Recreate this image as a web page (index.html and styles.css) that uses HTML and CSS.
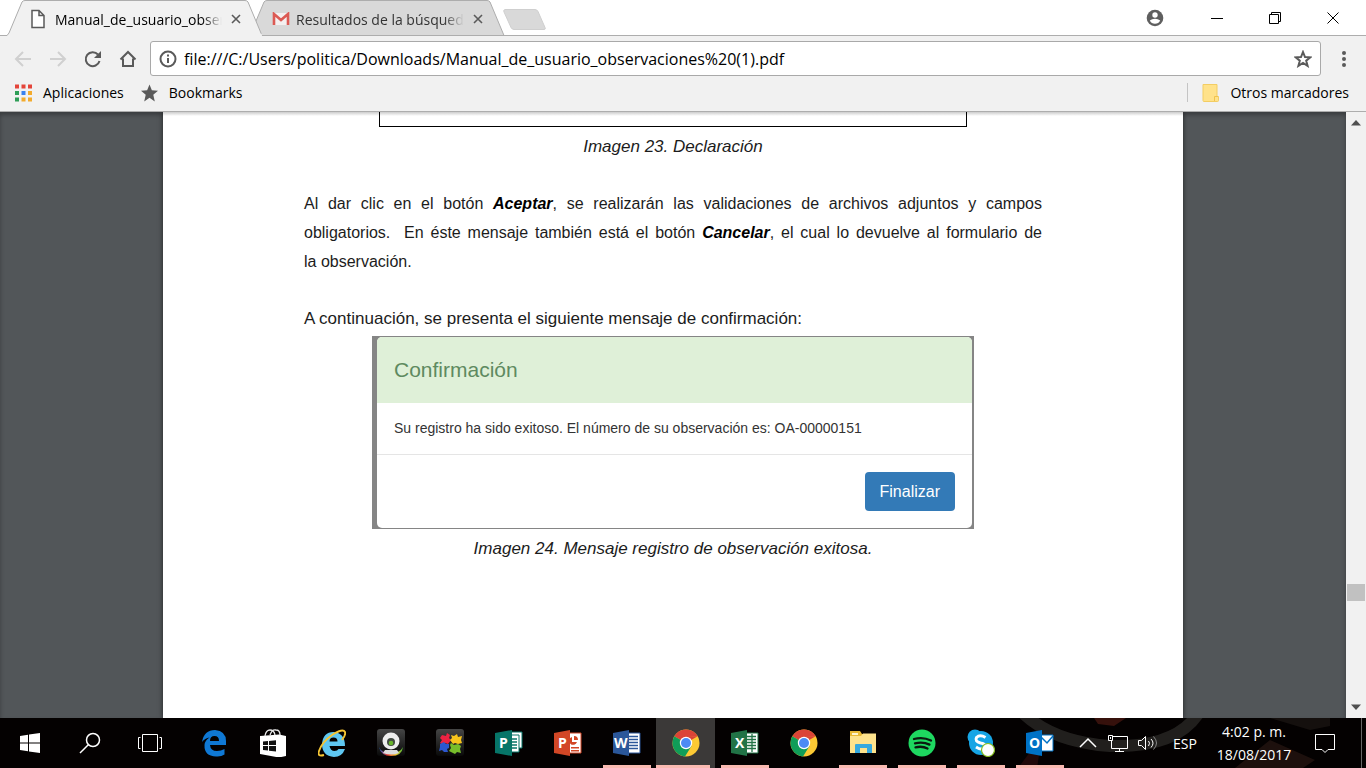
FILE: index.html
```html
<!DOCTYPE html>
<html lang="es">
<head>
    <meta charset="UTF-8">
    <meta name="viewport" content="width=device-width, initial-scale=1.0">
    <title>Manual_de_usuario_observaciones (1).pdf</title>
    <link rel="stylesheet" href="styles.css">
</head>
<body>

    <!-- Tabs -->
    <header class="tabstrip">
        <div class="tab active">
            <svg class="tab-shape" viewBox="0 0 256 36" preserveAspectRatio="none"><path d="M0 35.5 L2 33 L15 2 Q16 .5 18 .5 H238 Q240 .5 241 2 L255 35.5 V36 H0Z"/></svg>
            <svg class="tab-icon" viewBox="0 0 16 20"><path d="M2 1.500h7l5 5v12H2zM9 1.500v5h5" fill="#fff" stroke="#5a5a5a" stroke-width="1.500"/></svg>
            <button class="tab-title">Manual_de_usuario_observaciones</button>
            <button class="tab-close" aria-label="Cerrar"><svg viewBox="0 0 10 10"><path d="M1 1l8 8M9 1L1 9"/></svg></button>
        </div>
        <div class="tab">
            <svg class="tab-shape" viewBox="0 0 256 36" preserveAspectRatio="none"><path d="M0 35.500 L2 33 L15 2 Q16 .5 18 .5 H238 Q240 .5 241 2 L255 35.500Z"/></svg>
            <svg class="tab-icon gmail" viewBox="0 0 18 14"><path d="M1 1h16v12H1z" fill="#f4f0f0"/><path d="M2 13V2l7 6 7-6v11" fill="none" stroke="#dc5a54" stroke-width="2.600"/></svg>
            <button class="tab-title">Resultados de la búsqueda</button>
            <button class="tab-close" aria-label="Cerrar"><svg viewBox="0 0 10 10"><path d="M1 1l8 8M9 1L1 9"/></svg></button>
        </div>
        <button class="new-tab" aria-label="Nueva pestaña"><svg viewBox="0 0 44 22"><path d="M3 .5h30q2 0 3 2l7 16q1 2-1 2H12q-2 0-3-2L2 3q-1-2 1-2.500z"/></svg></button>
        <div class="window-controls">
            <button class="user" aria-label="Usuario"><svg viewBox="0 0 18 18"><circle cx="9" cy="9" r="8.300" fill="#5f5f5f"/><circle cx="9" cy="6" r="2.700" fill="#fff"/><path d="M3.800 11.500Q6 9.700 9 9.700t5.200 1.800Q12.500 14.700 9 14.700t-5.200-3.200z" fill="#fff"/></svg></button>
            <button aria-label="Minimizar"><svg viewBox="0 0 12 12"><path d="M0 6.500h12"/></svg></button>
            <button aria-label="Restaurar"><svg viewBox="0 0 12 12"><path d="M.5 2.500h9v9h-9zM2.500 2.500v-2h9v9h-2"/></svg></button>
            <button aria-label="Cerrar ventana"><svg viewBox="0 0 12 12"><path d="M.5 .5l11 11M11.500 .5l-11 11"/></svg></button>
        </div>
    </header>

    <!-- Address bar -->
    <nav class="toolbar">
        <button class="nav-btn disabled" aria-label="Atrás"><svg viewBox="0 0 18 18"><path d="M17 9H2M9 2L2 9l7 7"/></svg></button>
        <button class="nav-btn disabled" aria-label="Adelante"><svg viewBox="0 0 18 18"><path d="M1 9h15M9 2l7 7-7 7"/></svg></button>
        <button class="nav-btn" aria-label="Recargar"><svg viewBox="0 0 18 18"><path d="M15.500 11A7 7 0 1 1 14 4.500"/><path d="M17 1v7h-7z" fill="#5a5a5a" stroke="none"/></svg></button>
        <button class="nav-btn" aria-label="Inicio"><svg viewBox="0 0 18 18"><path d="M1.500 9.500L9 2l7.500 7.500M4 8.500V16h10V8.500"/></svg></button>
        <div class="omnibox">
            <svg class="info" viewBox="0 0 18 18"><circle cx="9" cy="9" r="7.500"/><path d="M9 8v5M9 4.500v2"/></svg>
            <input type="text" class="url" aria-label="Dirección" value="file:///C:/Users/politica/Downloads/Manual_de_usuario_observaciones%20(1).pdf">
            <button class="star" aria-label="Añadir a marcadores"><svg viewBox="0 0 18 18"><path d="M9 2l2 5 5.300.3-4.100 3.400 1.400 5.200L9 13l-4.600 2.900 1.400-5.200-4.100-3.400L7 7z"/></svg></button>
        </div>
        <button class="menu" aria-label="Menú"><svg viewBox="0 0 4 16"><circle cx="2" cy="2" r="2"/><circle cx="2" cy="8" r="2"/><circle cx="2" cy="14" r="2"/></svg></button>
    </nav>

    <!-- Bookmarks -->
    <nav class="bookmarks">
        <a href="#">
            <svg viewBox="0 0 17 17"><path d="M0 0h4v4H0zM6.500 0h4v4h-4zM13 0h4v4h-4z" fill="#e4453a"/><path d="M0 6.500h4v4H0zM0 13h4v4H0z" fill="#2f9e57"/><path d="M6.500 6.500h4v4h-4z" fill="#3b82ee"/><path d="M13 6.500h4v4h-4zM6.500 13h4v4h-4zM13 13h4v4h-4z" fill="#f3ab2d"/></svg>
            Aplicaciones
        </a>
        <a href="#">
            <svg viewBox="0 0 18 18"><path d="M9 0l2.500 6.200 6.500.5-5 4.200L14.600 18 9 14l-5.600 4L5 10.900 0 6.700l6.500-.5z" fill="#5a5a5a"/></svg>
            Bookmarks
        </a>
        <a href="#" class="others">
            <svg viewBox="0 0 17 18"><path d="M1 .5h14v12h1.500v4q0 1-1 1H2q-1 0-1-1z" fill="#ffe28a" stroke="#f3cd63"/><path d="M12.500 17v-4.500H16" fill="none" stroke="#f0c24c"/></svg>
            Otros marcadores
        </a>
    </nav>

    <!-- PDF viewer -->
    <main class="viewer">
        <div class="canvas">
            <article class="page">
                <div class="figure-end"></div>
                <p class="caption">Imagen 23. Declaración</p>
                <p class="text justified">Al dar clic en el botón <b>Aceptar</b>, se realizarán las validaciones de archivos adjuntos y campos obligatorios.&nbsp; En éste mensaje también está el botón <b>Cancelar</b>, el cual lo devuelve al formulario de la&nbsp;observación.</p>
                <p class="text">A continuación, se presenta el siguiente mensaje de confirmación:</p>
                <div class="shot">
                    <section class="modal">
                        <h2>Confirmación</h2>
                        <p>Su registro ha sido exitoso. El número de su observación es: OA-00000151</p>
                        <footer><button class="btn">Finalizar</button></footer>
                    </section>
                </div>
                <p class="caption">Imagen 24. Mensaje registro de observación exitosa.</p>
            </article>
        </div>
        <div class="scrollbar">
            <button aria-label="Subir"><svg viewBox="0 0 10 6"><path d="M0 5.500L5 0l5 5.500z"/></svg></button>
            <div class="track"><div class="thumb"></div></div>
            <button aria-label="Bajar"><svg viewBox="0 0 10 6"><path d="M0 .5L5 6l5-5.500z"/></svg></button>
        </div>
    </main>

    <!-- Taskbar -->
    <footer class="taskbar">
        <svg class="wallpaper" viewBox="0 0 366 50"><path d="M24 -4Q54 24 110 28 175 30 198 -4" fill="none" stroke="#211f1d" stroke-width="12"/><path d="M94 0h32l-12 8-16-2z" fill="#36110c"/><path d="M18 50L42 18l-5 32z" fill="#200808"/><path d="M235 50l35-28 45 20-12 8z" fill="#1d100d"/><path d="M270 0l40 12 20-4V0z" fill="#15100e"/></svg>
        <div class="system">
            <button aria-label="Inicio"><svg viewBox="0 0 28 28"><path d="M4 7l8-1.200v7.700H4zM13 5.600L24 4v9.500H13zM4 14.500h8v7.800L4 21zM13 14.500h11V24l-11-1.600z" fill="#fff"/></svg></button>
            <button aria-label="Buscar"><svg viewBox="0 0 28 28"><g fill="none" stroke="#fff" stroke-width="1.500"><circle cx="17" cy="11" r="6.500"/><path d="M12.300 15.700L4 24"/></g></svg></button>
            <button aria-label="Vista de tareas"><svg viewBox="0 0 28 28"><path d="M6.500 5.500h15v17h-15zM4.500 8.500h-2v11h2M23.500 8.500h2v11h-2" fill="none" stroke="#fff"/></svg></button>
        </div>
        <div class="apps">
            <button aria-label="Edge"><svg viewBox="0 0 28 28"><path d="M2 13Q4 1 15 1q11 1 11 11v4H10q.5 6 7 6 4 0 7.500-2v5.500Q21 28 16 27.500 4 27 4.500 16 5 11 9.500 8.500 5 9 2 13zM10 12h9q0-5-4.500-5T10 12z" fill="#0f78d4" fill-rule="evenodd"/></svg></button>
            <button aria-label="Tienda"><svg viewBox="0 0 28 28"><path d="M1 7l19-1.500v23L1 25z" fill="#fff"/><path d="M20 5.500l7 1.500v20l-7 1.500z" fill="#fff"/><path d="M6 7q1-6 5-6t5 5M11 6q2-6 6-5 4 0 4 5" fill="none" stroke="#e8e8e8" stroke-width="1.300"/><path d="M4 12.500l5-.5v4H4zM10 12l7-.7V16h-7zM4 17h5v4.500l-5-.5zM10 17h7v5.500l-7-.8z" fill="#111"/></svg></button>
            <button aria-label="Internet Explorer"><svg viewBox="0 0 28 28"><path d="M4 15Q5 3 15.500 3 27 4 27 17H11.500q1 5 5 5 3 0 4-2H27q-3 8-11 8Q4 27 4 15zm7.500-2.500h8q0-4-4-4t-4 4z" fill="#5fc7f2" fill-rule="evenodd"/><path d="M6 26Q-1 28 1 22 4 13 14 6 25-1 27 3q1 3-3 8" fill="none" stroke="#f5c534" stroke-width="1.900"/></svg></button>
            <button aria-label="Cámara"><svg viewBox="0 0 28 28"><defs><linearGradient id="tile" x2="0" y2="1"><stop stop-color="#454545"/><stop offset="1" stop-color="#090909"/></linearGradient><linearGradient id="rainbow"><stop stop-color="#226be0"/><stop offset=".35" stop-color="#ed342c"/><stop offset=".7" stop-color="#f1c830"/><stop offset="1" stop-color="#4ab833"/></linearGradient></defs><rect width="28" height="27" rx="3" fill="url(#tile)"/><path d="M2 18q2 6 12 6 9 0 12-6-1 9-12 9Q4 27 2 18z" fill="url(#rainbow)"/><path d="M8 21h12l2 3q-8 3-16 0z" fill="#ddd"/><circle cx="14" cy="12" r="8.500" fill="#eee"/><circle cx="14" cy="13" r="4" fill="#424b42"/><circle cx="14" cy="14" r="2.300" fill="#69b52c"/></svg></button>
            <button aria-label="Rompecabezas"><svg viewBox="0 0 28 28"><rect width="28" height="27" rx="3" fill="url(#tile)"/><path d="M6 6l4 1 1-3 3 2-1 3 2 2-3 4-3-1-2 2-3-2 2-3-2-2z" fill="#ed2342"/><path d="M15 6l3 1 3-2 1 3 4-1-1 4 1 3-4 1-3-1-2 1-3-4 2-2z" fill="#f7c41c"/><path d="M4 15l4-2 2 2 3 0 0 4-2 1 1 3-4 0-2-2-3 1 1-4z" fill="#2c57d0"/><path d="M15 14l3 2 4-1 3 2-1 3 1 4-4-1-2 2-4-2-2-1 2-3-1-3z" fill="#77bd2a"/></svg></button>
            <button aria-label="Publisher"><svg viewBox="0 0 28 28"><path d="M16 3h11v16H16z" fill="#fff" stroke="#077568"/><path d="M12 6h12v17H12z" fill="#fff" stroke="#077568"/><path d="M17 10h5M17 13h5M17 16h5M17 19h5" stroke="#077568" stroke-width="1.500"/><path d="M0 4l17-3v26L0 24z" fill="#077568"/><text x="4" y="19">P</text></svg></button>
            <button aria-label="PowerPoint"><svg viewBox="0 0 28 28"><path d="M14 4h13v20H14z" fill="#fff" stroke="#d24726"/><path d="M18 8a4 4 0 1 0 5 5h-5zM20 7v4h4q0-4-4-4zM17 18h8v1.500h-8zM17 21h8v1.500h-8z" fill="#d24726"/><path d="M0 4l16-3v26L0 24z" fill="#d24726"/><text x="4" y="19">P</text></svg></button>
            <button class="open" aria-label="Word"><svg viewBox="0 0 28 28"><path d="M14 4h13v20H14z" fill="#fff" stroke="#2b579a"/><path d="M16 7.500h9M16 10.500h9M16 13.500h9M16 16.500h9M16 19.500h9" stroke="#2b579a" stroke-width="1.500"/><path d="M0 4l16-3v26L0 24z" fill="#2b579a"/><text x="1" y="19">W</text></svg></button>
            <button class="open current" aria-label="Chrome"><svg viewBox="0 0 28 28"><circle cx="14" cy="14" r="13.500" fill="#fcc934"/><path d="M14 14L2.300 7.250A13.500 13.500 0 0 1 25.700 7.250L14 8z" fill="#db4437"/><path d="M25.700 7.250H14V14z" fill="#db4437"/><path d="M2.300 7.250A13.500 13.500 0 0 0 13 27.500L19.500 17 14 14z" fill="#109d58"/><circle cx="14" cy="14" r="6.200" fill="#fff"/><circle cx="14" cy="14" r="5" fill="#4c8bf5"/></svg></button>
            <button class="open" aria-label="Excel"><svg viewBox="0 0 28 28"><path d="M14 4h13v20H14z" fill="#fff" stroke="#217346"/><path d="M16 7.500h9M16 10.500h9M16 13.500h9M16 16.500h9M16 19.500h9M21 5v18" stroke="#217346" stroke-width="1.300"/><path d="M0 4l16-3v26L0 24z" fill="#217346"/><text x="4" y="19">X</text></svg></button>
            <button aria-label="Chrome"><svg viewBox="0 0 28 28"><circle cx="14" cy="14" r="13.500" fill="#fcc934"/><path d="M14 14L2.300 7.250A13.500 13.500 0 0 1 25.700 7.250L14 8z" fill="#db4437"/><path d="M25.700 7.250H14V14z" fill="#db4437"/><path d="M2.300 7.250A13.500 13.500 0 0 0 13 27.500L19.500 17 14 14z" fill="#109d58"/><circle cx="14" cy="14" r="6.200" fill="#fff"/><circle cx="14" cy="14" r="5" fill="#4c8bf5"/></svg></button>
            <button class="open" aria-label="Explorador"><svg viewBox="0 0 28 28"><path d="M1 2h10l2 3h14v5H1z" fill="#e9b935"/><path d="M3 4h6v2H3z" fill="#fff5ce"/><path d="M1 7h11l2-2.500h13V24H1z" fill="#fde28c"/><path d="M6 24v-8q0-1 1-1h15q1 0 1 1v8h-5v-5h-7v5z" fill="#35a9df"/></svg></button>
            <button class="open" aria-label="Spotify"><svg viewBox="0 0 28 28"><circle cx="14" cy="14" r="13.500" fill="#1ed760"/><path d="M6 10q9-2.500 17 1.500M7 14.300q8-2 14.500 1.300M7.500 18.300q7-1.500 12 1.200" fill="none" stroke="#0b180f" stroke-width="2.300" stroke-linecap="round"/></svg></button>
            <button class="open" aria-label="Skype"><svg viewBox="0 0 28 28"><circle cx="8" cy="8" r="7.500" fill="#16a5e5"/><circle cx="14" cy="14" r="12" fill="#16a5e5"/><circle cx="20" cy="20" r="7" fill="#16a5e5"/><path d="M18.500 8.500Q13 5 9.500 8.500q-2 4 4 5.500 6 1 4.500 4.500-3 3.500-9-.5" fill="none" stroke="#fff" stroke-width="3"/><circle cx="21" cy="21" r="6.500" fill="#fff" stroke="#83bc1e" stroke-width="1.200"/></svg></button>
            <button class="open" aria-label="Outlook"><svg viewBox="0 0 28 28"><path d="M14 6h13v16H14z" fill="#fff" stroke="#0072c6"/><path d="M15 8l6 6 6-7" fill="none" stroke="#0072c6" stroke-width="1.500"/><path d="M0 4l16-3v26L0 24z" fill="#0072c6"/><text x="3" y="19">O</text></svg></button>
        </div>
        <div class="tray">
            <button aria-label="Iconos ocultos"><svg viewBox="0 0 20 20"><path d="M2 14l8-8 8 8" stroke-width="1.500"/></svg></button>
            <button aria-label="Red"><svg viewBox="0 0 20 20"><path d="M5 3.500h14.500v12H3.500V8M11.500 15.500v3M7 18.500h9M.5 2.500h4v5h-4zM2.500 4v2"/></svg></button>
            <button aria-label="Volumen"><svg viewBox="0 0 20 20"><path d="M.5 7.500h3l4-4v13l-4-4h-3zM10.500 8q2 2 0 5M13 6q4 4 0 8.500"/><path d="M15.500 3.500q6 6.500 0 13" stroke="#888"/></svg></button>
            <button class="lang">ESP</button>
            <button class="clock">4:02 p. m.<br>18/08/2017</button>
            <button class="notice" aria-label="Notificaciones"><svg viewBox="0 0 20 20"><path d="M.5 1.500h19v15H13l-3 3-3-3H.5z"/></svg></button>
            <button class="desktop" aria-label="Mostrar escritorio"></button>
        </div>
    </footer>

</body>
</html>
```
FILE: styles.css
```css
* {
    box-sizing: border-box;
}
body {
    margin: 0;
    height: 100vh;
    display: flex;
    flex-direction: column;
    overflow: hidden;
    font-family: "Open Sans", "Noto Sans", sans-serif;
    font-size: 14px;
    color: #000;
    background-color: #f1f1f1;
}
button {
    border: none;
    background: none;
    padding: 0;
    font: inherit;
    color: inherit;
}
svg {
    display: block;
    flex: none;
}

/* Tabs */
.tabstrip {
    display: flex;
    flex: none;
    height: 36px;
    padding: 0 4px 0 7px;
    background-color: #fff;
    border-bottom: 1px solid #adadad;
}
.tab {
    position: relative;
    display: flex;
    align-items: center;
    width: 256px;
    height: 36px;
    padding: 2px 22px 0 23px;
    margin-right: -14px;
    color: #333;
}
.tab.active {
    z-index: 1;
    color: #000;
}
.tab-shape {
    position: absolute;
    top: 0;
    left: 0;
    width: 100%;
    height: 100%;
    fill: #d9d9d9;
    stroke: #adadad;
}
.tab.active .tab-shape {
    fill: #f1f1f1;
    stroke-dasharray: 298 400; /* outlines the sides and top only */
}
.tab-icon {
    position: relative;
    width: 16px;
    height: 20px;
    margin-right: 9px;
}
.tab-icon.gmail {
    width: 18px;
    height: 14px;
    margin-right: 6px;
}
.tab-title {
    position: relative;
    flex: 1;
    min-width: 0;
    overflow: hidden;
    white-space: nowrap;
    text-align: left;
    -webkit-mask-image: linear-gradient(to right, #000 88%, transparent);
    mask-image: linear-gradient(to right, #000 88%, transparent);
}
.tab-close {
    position: relative;
    margin-left: 9px;
}
.tab-close svg {
    width: 10px;
    height: 10px;
    stroke: #5a5a5a;
    stroke-width: 1.6;
}
.new-tab {
    margin-left: 11px;
    padding-top: 4px;
}
.new-tab svg {
    width: 44px;
    height: 22px;
    fill: #d9d9d9;
    stroke: #cfcfcf;
}
.window-controls {
    display: flex;
    align-items: center;
    margin-left: auto;
}
.window-controls button {
    display: flex;
    justify-content: center;
    width: 58px;
}
.window-controls .user {
    width: 66px;
}
.window-controls svg {
    width: 12px;
    height: 12px;
    fill: none;
    stroke: #000;
}
.window-controls .user svg {
    width: 18px;
    height: 18px;
    stroke: none;
}

/* Address bar */
.toolbar {
    display: flex;
    align-items: center;
    flex: none;
    padding: 5px 20px 4px 14px;
}
.nav-btn {
    margin-right: 17px;
}
.nav-btn svg {
    width: 18px;
    height: 18px;
    fill: none;
    stroke: #5a5a5a;
    stroke-width: 2;
}
.nav-btn.disabled svg {
    stroke: #d0d0d0;
}
.omnibox {
    display: flex;
    align-items: center;
    flex: 1;
    height: 35px;
    margin-left: -4px;
    padding: 0 8px;
    background-color: #fff;
    border: 1px solid #a9a9a9;
    border-radius: 3px;
}
.omnibox svg {
    width: 18px;
    height: 18px;
    fill: none;
    stroke: #5a5a5a;
    stroke-width: 2;
}
.url {
    flex: 1;
    min-width: 0;
    padding: 0 7px;
    border: none;
    outline: none;
    font: inherit;
    font-size: 16px;
    color: #000;
}
.menu {
    margin-left: 21px;
}
.menu svg {
    width: 4px;
    height: 16px;
    fill: #5a5a5a;
}

/* Bookmarks */
.bookmarks {
    display: flex;
    align-items: center;
    flex: none;
    height: 32px;
    padding: 0 17px 6px 15px;
    border-bottom: 1px solid #adadad;
}
.bookmarks a {
    display: flex;
    align-items: center;
    gap: 11px;
    margin-right: 17px;
    color: #000;
    text-decoration: none;
}
.bookmarks svg {
    width: 17px;
    height: 18px;
}
.bookmarks .others {
    margin: 0 0 0 auto;
    padding-left: 14px;
    border-left: 1px solid #c4c4c4;
}

/* PDF viewer */
.viewer {
    display: flex;
    flex: 1;
    min-height: 0;
}
.canvas {
    flex: 1;
    overflow: hidden;
    background-color: #525659;
    box-shadow: inset 0 3px 4px rgba(0, 0, 0, 0.3);
}
.page {
    width: 76%;
    max-width: 1020px;
    min-height: 100%;
    margin: 0 auto;
    padding: 0 141px;
    background: linear-gradient(#ccc, #fff 4px);
    box-shadow: 0 0 5px rgba(0, 0, 0, 0.6);
    font-family: "Liberation Sans", Arial, sans-serif;
    font-size: 17px;
    line-height: 29px;
    color: #1c1c1c;
}
.figure-end {
    height: 15px;
    margin: 0 75px;
    border: 1px solid #000;
    border-top: none;
}
.caption {
    margin: 5px 0 0;
    text-align: center;
    font-style: italic;
}
.text {
    margin: 28px 0;
}
.text.justified {
    font-size: 16px;
    text-align: justify;
}
.text b {
    font-style: italic;
    color: #000;
}
.shot {
    margin: -25px 68px 0;
    padding: 1px 2px 1px 5px;
    background-color: #858585;
}
.modal {
    overflow: hidden;
    background-color: #fff;
    border-radius: 5px;
}
.modal h2 {
    margin: 0;
    padding: 18px 17px 19px;
    background-color: #dff0d8;
    font-size: 21px;
    font-weight: normal;
    color: #5e8a60;
}
.modal p {
    margin: 0;
    padding: 11px 17px;
    font-size: 14px;
    color: #333;
}
.modal footer {
    display: flex;
    justify-content: flex-end;
    padding: 17px;
    border-top: 1px solid #e5e5e5;
}
.btn {
    height: 39px;
    padding: 0 15px;
    border-radius: 4px;
    background-color: #337ab7;
    font-size: 16px;
    color: #fff;
}
.scrollbar {
    display: flex;
    flex-direction: column;
    width: 20px;
    background-color: #f1f1f1;
}
.scrollbar button {
    display: flex;
    justify-content: center;
    align-items: center;
    height: 22px;
}
.scrollbar svg {
    width: 10px;
    height: 6px;
    fill: #505050;
}
.track {
    flex: 1;
    padding: 0 1px;
}
.track::before {
    content: "";
    display: block;
    height: 80%;
}
.thumb {
    height: 17px;
    background-color: #c1c1c1;
}

/* Taskbar */
.taskbar {
    position: relative;
    display: flex;
    flex: none;
    height: 50px;
    background-color: #040101;
    color: #fff;
}
.wallpaper {
    position: absolute;
    right: 0;
    top: 0;
    width: 366px;
    height: 50px;
}
.system,
.apps,
.tray {
    position: relative;
    display: flex;
}
.taskbar button {
    display: flex;
    justify-content: center;
    align-items: center;
}
.system button {
    width: 60px;
}
.apps {
    margin-left: 4px;
}
.apps button {
    width: 59px;
    border-bottom: 3px solid transparent;
    border-top: 3px solid transparent;
}
.system svg,
.apps svg {
    width: 28px;
    height: 28px;
}
.apps text {
    font-family: "Open Sans", sans-serif;
    font-size: 14px;
    font-weight: bold;
    fill: #fff;
}
.apps .open {
    background: linear-gradient(#f9b9b0, #f9b9b0) center bottom / 48px 3px no-repeat border-box;
}
.apps .current {
    background: linear-gradient(#f9b9b0, #f9b9b0) left bottom / 54px 3px no-repeat border-box, #3b3938;
}
.tray {
    margin-left: auto;
}
.tray button {
    width: 30px;
}
.tray svg {
    width: 20px;
    height: 20px;
    fill: none;
    stroke: #fff;
}
.tray .lang {
    width: 44px;
}
.tray .clock {
    width: 94px;
    line-height: 23px;
}
.tray .notice {
    width: 48px;
}
.tray .desktop {
    width: 5px;
    margin-left: 12px;
    border-left: 1px solid #666;
}
```
